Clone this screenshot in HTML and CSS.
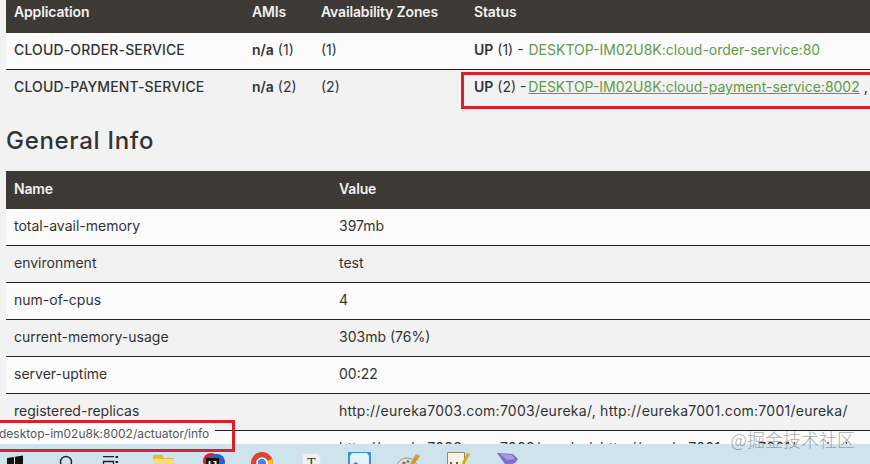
FILE: index.html
```html
<!DOCTYPE html>
<html lang="en">
<head>
<meta charset="utf-8">
<title>Eureka</title>
<link rel="stylesheet" href="styles.css">
</head>
<body>
<main class="page">
  <table class="tbl apps">
    <thead><tr><th class="c-app">Application</th><th class="c-ami">AMIs</th><th class="c-az">Availability Zones</th><th>Status</th></tr></thead>
    <tbody>
      <tr><td class="strong">CLOUD-ORDER-SERVICE</td><td><b>n/a</b> (1)</td><td>(1)</td><td><b>UP</b> (1) - <a class="link">DESKTOP-IM02U8K:cloud-order-service:80</a></td></tr>
      <tr><td class="strong">CLOUD-PAYMENT-SERVICE</td><td><b>n/a</b> (2)</td><td>(2)</td><td><b>UP</b> (2) - <a class="link hover">DESKTOP-IM02U8K:cloud-payment-service:8002</a> ,</td></tr>
    </tbody>
  </table>
  <h2 class="title">General Info</h2>
  <table class="tbl info">
    <thead><tr><th class="c-name">Name</th><th>Value</th></tr></thead>
    <tbody>
      <tr><td>total-avail-memory</td><td>397mb</td></tr>
      <tr><td>environment</td><td>test</td></tr>
      <tr><td>num-of-cpus</td><td>4</td></tr>
      <tr><td>current-memory-usage</td><td>303mb (76%)</td></tr>
      <tr><td>server-uptime</td><td>00:22</td></tr>
      <tr><td>registered-replicas</td><td class="url">http://eureka7003.com:7003/eureka/, http://eureka7001.com:7001/eureka/</td></tr>
      <tr><td></td><td class="url">http://eureka7003.com:7003/eureka/, http://eureka7001.com:7001/eureka/</td></tr>
    </tbody>
  </table>
</main>
<footer class="taskbar">
  <svg class="ico" viewBox="0 0 24 24"><path d="M4 6l7-1v7H4zM12 4.800l8-1.300V12h-8zM4 13h7v7l-7-1zM12 13h8v8l-8-1z" fill="#111"/></svg>
  <svg class="ico" viewBox="0 0 24 24"><circle cx="14" cy="10" r="5.500" fill="none" stroke="#222" stroke-width="1.400"/><path d="M10 14l-4 5" stroke="#222" stroke-width="1.400"/></svg>
  <svg class="ico" viewBox="0 0 24 24"><path d="M2.500 9.500h10v10h-10zM2 4.700h11" fill="none" stroke="#222" stroke-width="1.300"/><path d="M14.500 4h2.500v2h-2.500zM14.500 9h2.500v2h-2.500z" fill="#222"/></svg>
  <svg class="ico" viewBox="0 0 24 24"><path d="M3 3h9l2 3h10v18H3z" fill="#e6b83f"/><path d="M3 7h21v17H3z" fill="#f7dc80"/></svg>
  <svg class="ico" viewBox="0 0 24 24"><circle cx="12" cy="9" r="8" fill="#d8203c"/><circle cx="18" cy="10" r="8" fill="#2c5fc4"/><rect x="7" y="6" width="13" height="18" fill="#111"/><text class="ij" x="9" y="17">IJ</text></svg>
  <svg class="ico" viewBox="0 0 24 24"><circle cx="14" cy="11" r="11" fill="#db4437"/><path d="M14 11L4 15A11 11 0 0 0 16 22z" fill="#2b9a48"/><path d="M14 11l10-4a11 11 0 0 1-9 15z" fill="#f5c518"/><circle cx="14" cy="11" r="5" fill="#4285f4" stroke="#fff" stroke-width="1.600"/></svg>
  <svg class="ico" viewBox="0 0 24 24"><path d="M5.500 1.500h15l3 3v20h-18z" fill="#eef0f1" stroke="#dfe3e5"/><text class="t" x="10" y="16">T</text></svg>
  <svg class="ico" viewBox="0 0 24 24"><path d="M2 0h23v24H2z" fill="#3a93d6"/><path d="M6 1h15l2 3v20H4V4z" fill="#e4f3fa"/><path d="M4 14l6-4 5 4 8 2v8H4z" fill="#4c8a6a"/></svg>
  <svg class="ico" viewBox="0 0 24 24"><ellipse cx="12" cy="15" rx="10" ry="9" fill="#dbe5ec" stroke="#8a9aa6"/><circle cx="9" cy="11" r="1.600" fill="#e04848"/><circle cx="13" cy="9.500" r="1.600" fill="#4aa64a"/><circle cx="7" cy="15" r="1.600" fill="#3d78d0"/><path d="M15 12l6-10 4 2-7 10z" fill="#d8973a"/></svg>
  <svg class="ico" viewBox="0 0 24 24"><path d="M3.500 .500h17v24h-17z" fill="#f6f3e2" stroke="#8a8a7a"/><path d="M7 10v12M10 12v10M13 10v12M16 15v7" stroke="#333" stroke-width="1.500"/><path d="M18 11l5-10 3 1-6 11z" fill="#dca420"/></svg>
  <svg class="ico" viewBox="0 0 24 24"><path d="M4 1l16 1 5 5-3 4-3 1 1 13h-7l-1-13z" fill="#7d70c9"/><path d="M7 2l12 1 3 4-8 1z" fill="#a79ce4"/></svg>
</footer>
<div class="box box-status"></div>
<div class="statusbar">desktop-im02u8k:8002/actuator/info</div>
<div class="box box-url"></div>
<div class="watermark">@掘金技术社区</div>
</body>
</html>
```
FILE: styles.css
```css
html, body { margin: 0; height: 464px; overflow: hidden; }
body { background: #f2f2f2; color: #333; font: 14px/20px Inter, sans-serif; position: relative; }
.page { padding-left: 6px; margin-top: -8px; }
.tbl { border-collapse: collapse; width: 864px; table-layout: fixed; }
.tbl th { background: #3d3934; color: #f2f2f2; text-align: left; font-weight: 600; padding: 0 8px 1px; letter-spacing: -.15px; }
.tbl td { padding: 0 8px 2px; height: 34px; border-top: 1px solid #222; white-space: nowrap; }
.tbl b { font-weight: 600; }
.tbl tbody tr:nth-child(odd) td { background: #fbfbfb; }
.tbl tbody tr:first-child td { border-top: 0; }
.apps th { height: 40px; }
.info th { height: 35px; padding-bottom: 3px; }
.c-app { width: 222px; }
.c-ami { width: 53px; }
.c-az { width: 137px; }
.c-name { width: 309px; }
.strong { font-weight: 500; letter-spacing: .15px; }
.url { letter-spacing: .25px; }
.link { color: #629a4a; margin-left: 1px; }
.hover { text-decoration: underline; margin-left: -2px; }
.title { font-size: 24px; line-height: 30px; font-weight: 500; letter-spacing: .7px; margin: 20px 0 15px; }
.box { position: absolute; border: 3px solid #d9202c; box-sizing: border-box; }
.box-status { left: 461px; top: 72px; width: 420px; height: 37px; }
.box-url { left: -10px; top: 420px; width: 245px; height: 32px; }
.statusbar { position: absolute; left: 0; top: 423px; width: 215px; height: 21px; background: #fff; border-radius: 0 3px 0 0; font-size: 12px; line-height: 22px; overflow: hidden; text-indent: -1px; white-space: nowrap; color: #555; }
.watermark { position: absolute; right: 15px; top: 428px; font: 300 18px/22px "Noto Sans CJK SC", sans-serif; color: rgba(110, 110, 110, .6); }
.taskbar { position: absolute; left: 0; right: 0; bottom: 0; height: 12px; padding: 8px 0 0 3px; background: #cfe3ec; display: flex; gap: 25px; overflow: hidden; }
.ico { width: 24px; height: 24px; flex: none; overflow: visible; }
.ij { font: 700 11px "Liberation Sans", sans-serif; fill: #fff; }
.t { font: 14px "Liberation Serif", serif; fill: #333; }
```
